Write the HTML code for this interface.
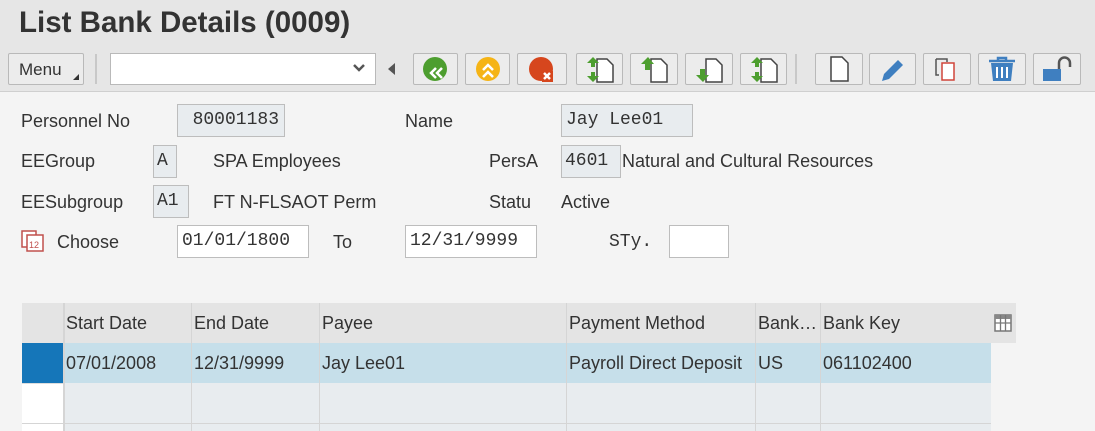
<!DOCTYPE html>
<html><head><style>
*{box-sizing:border-box}
body{margin:0;width:1095px;height:431px;overflow:hidden;background:#f4f4f4;font-family:"Liberation Sans",sans-serif;color:#333;position:relative}
.a{position:absolute}
.top{left:0;top:0;width:1095px;height:92px;background:#e6e6e6;border-bottom:1px solid #cfcfcf}
.btn{position:absolute;top:53px;height:32px;background:#ececec;border:1px solid #b9b9b9;border-radius:2px}
.t{position:absolute;font-size:18px;color:#333}
.in{position:absolute;height:33px;border:1px solid #bdbdbd;font-family:"Liberation Mono",monospace;font-size:18px;padding:5px 4px}
.ro{background:#e8ecef}
.wh{background:#fff}
.c{position:absolute;font-size:18px;top:0;line-height:40px;padding-left:3px}
</style></head><body>
<div class="a top"></div>
<div class="t" style="left:19px;top:6px;font-size:29.5px;font-weight:bold;color:#333">List Bank Details (0009)</div>
<div class="btn" style="left:8px;width:76px;font-size:17px;padding:6px 0 0 10px">Menu<span class="a" style="right:4px;bottom:4px;width:0;height:0;border-left:6px solid transparent;border-bottom:6px solid #333"></span></div>
<div class="a" style="left:95px;top:54px;width:2px;height:30px;background:#c8c8c8"></div>
<div class="a wh" style="left:110px;top:53px;width:266px;height:32px;border:1px solid #b9b9b9"></div>
<svg class="a" style="left:352px;top:62px" width="14" height="12"><path d="M2 3l5 5 5-5" stroke="#555" stroke-width="2.5" fill="none"/></svg>
<div class="a" style="left:388px;top:63px;width:0;height:0;border-top:6px solid transparent;border-bottom:6px solid transparent;border-right:7px solid #555"></div>
<div class="btn" style="left:413px;width:45px"><svg width="43" height="30"><circle cx="21" cy="15" r="12" fill="#4d9e2f"/><path d="M22 14l-5 5 5 5M28 14l-5 5 5 5" stroke="#fff" stroke-width="2.5" fill="none"/></svg></div>
<div class="btn" style="left:465px;width:45px"><svg width="43" height="30"><circle cx="22" cy="15" r="12" fill="#f5b416"/><path d="M17 16l5-5 5 5M17 23l5-5 5 5" stroke="#fff" stroke-width="2.5" fill="none"/></svg></div>
<div class="btn" style="left:517px;width:50px"><svg width="48" height="30"><circle cx="23" cy="15" r="12" fill="#d6461d"/><rect x="24" y="17" width="11" height="11" fill="#d6461d"/><path d="M26 19l6 6M32 19l-6 6" stroke="#fff" stroke-width="2.5"/></svg></div>
<svg width="0" height="0"><defs><g id="pg"><path d="M20 5h10l6 6v17H20z" fill="#fff" stroke="#444" stroke-width="1.5"/></g></defs></svg>
<div class="btn" style="left:576px;width:47px"><svg width="45" height="30"><use href="#pg"/><path d="M16 3l-6 6h4v4h4v-4h4z" fill="#4d9e2f"/><path d="M16 28l-6-6h4v-4h4v4h4z" fill="#4d9e2f"/></svg></div>
<div class="btn" style="left:630px;width:48px"><svg width="45" height="30"><use href="#pg"/><path d="M17 3l-7 7h4v6h5v-6h4z" fill="#4d9e2f"/></svg></div>
<div class="btn" style="left:685px;width:48px"><svg width="45" height="30"><use href="#pg"/><path d="M17 28l-7-7h4v-6h5v6h4z" fill="#4d9e2f"/></svg></div>
<div class="btn" style="left:740px;width:47px"><svg width="45" height="30"><use href="#pg"/><path d="M16 3l-6 6h4v4h4v-4h4z" fill="#4d9e2f"/><path d="M16 28l-6-6h4v-4h4v4h4z" fill="#4d9e2f"/></svg></div>
<div class="a" style="left:795px;top:54px;width:2px;height:30px;background:#c8c8c8"></div>
<div class="btn" style="left:815px;width:48px"><svg width="46" height="30"><path d="M15 3h11l6 6v18H15z" fill="#fff" stroke="#444" stroke-width="1.5"/></svg></div>
<div class="btn" style="left:869px;width:47px"><svg width="45" height="30"><path d="M12 27l2-7 14-14 5 5-14 14z" fill="#3f7fc0"/></svg></div>
<div class="btn" style="left:923px;width:48px"><svg width="46" height="30"><path d="M12 5h11v3M12 5v16h3" stroke="#555" stroke-width="1.5" fill="none"/><rect x="18" y="9" width="12" height="17" fill="#fff" stroke="#d0453a" stroke-width="1.5"/></svg></div>
<div class="btn" style="left:978px;width:48px"><svg width="46" height="30"><path d="M10 7h26M19 7V4h8v3" stroke="#3f7fc0" stroke-width="2.5" fill="none"/><path d="M12 9h22l-2 18H14z" fill="#3f7fc0"/><path d="M18 13v11M23 13v11M28 13v11" stroke="#fff" stroke-width="2"/></svg></div>
<div class="btn" style="left:1033px;width:48px"><svg width="46" height="30"><rect x="9" y="15" width="18" height="12" fill="#3f7fc0"/><path d="M25 15v-6a5.5 5.5 0 0 1 11 0v4" stroke="#555" stroke-width="2.5" fill="none"/></svg></div>

<div class="t" style="left:21px;top:111px">Personnel No</div>
<div class="in ro" style="left:177px;top:104px;width:108px;text-align:right;padding-right:5px">80001183</div>
<div class="t" style="left:405px;top:111px">Name</div>
<div class="in ro" style="left:561px;top:104px;width:132px">Jay Lee01</div>
<div class="t" style="left:21px;top:151px">EEGroup</div>
<div class="in ro" style="left:153px;top:145px;width:24px;padding:5px 3px">A</div>
<div class="t" style="left:213px;top:151px">SPA Employees</div>
<div class="t" style="left:489px;top:151px">PersA</div>
<div class="in ro" style="left:561px;top:145px;width:60px;padding:5px 3px">4601</div>
<div class="t" style="left:622px;top:151px">Natural and Cultural Resources</div>
<div class="t" style="left:21px;top:192px">EESubgroup</div>
<div class="in ro" style="left:153px;top:185px;width:36px;padding:5px 3px">A1</div>
<div class="t" style="left:213px;top:192px">FT N-FLSAOT Perm</div>
<div class="t" style="left:489px;top:192px">Statu</div>
<div class="t" style="left:561px;top:192px">Active</div>
<svg class="a" style="left:21px;top:230px" width="24" height="22"><rect x="1" y="1" width="14" height="16" fill="#fff" stroke="#c0504d" stroke-width="1.5"/><rect x="6" y="5" width="16" height="16" fill="#fff" stroke="#c0504d" stroke-width="1.5"/><text x="8" y="18" font-size="9" fill="#c0504d" font-family="Liberation Sans">12</text></svg>
<div class="t" style="left:57px;top:232px">Choose</div>
<div class="in wh" style="left:177px;top:225px;width:132px">01/01/1800</div>
<div class="t" style="left:333px;top:232px">To</div>
<div class="in wh" style="left:405px;top:225px;width:132px">12/31/9999</div>
<div class="t" style="left:609px;top:232px;font-family:'Liberation Mono',monospace">STy.</div>
<div class="in wh" style="left:669px;top:225px;width:60px"></div>

<div class="a" style="left:22px;top:303px;width:994px;height:128px;background:#f4f4f4">
 <div class="a" style="left:0;top:0;width:994px;height:40px;background:#e4e4e4"></div>
 <div class="a" style="left:0;top:40px;width:41px;height:40px;background:#1576b9"></div>
 <div class="a" style="left:41px;top:40px;width:928px;height:40px;background:#c6dfea"></div>
 <div class="a" style="left:0;top:80px;width:41px;height:48px;background:#fff;border-top:1px solid #ddd"></div>
 <div class="a" style="left:41px;top:80px;width:928px;height:48px;background:#e8ecef"></div>
 <div class="a" style="left:0;top:120px;width:969px;height:1px;background:#d5d5d5"></div>
 <div class="a" style="left:41px;top:0;width:2px;height:128px;background:#d5d5d5"></div>
 <div class="a" style="left:169px;top:0;width:1px;height:128px;background:#d5d5d5"></div>
 <div class="a" style="left:297px;top:0;width:1px;height:128px;background:#d5d5d5"></div>
 <div class="a" style="left:544px;top:0;width:1px;height:128px;background:#d5d5d5"></div>
 <div class="a" style="left:733px;top:0;width:1px;height:128px;background:#d5d5d5"></div>
 <div class="a" style="left:798px;top:0;width:1px;height:128px;background:#d5d5d5"></div>
 <div class="c" style="left:41px">Start Date</div><div class="c" style="left:169px">End Date</div><div class="c" style="left:297px">Payee</div><div class="c" style="left:544px">Payment Method</div><div class="c" style="left:733px">Bank…</div><div class="c" style="left:798px">Bank Key</div>
 <div class="c" style="left:41px;top:40px">07/01/2008</div><div class="c" style="left:169px;top:40px">12/31/9999</div><div class="c" style="left:297px;top:40px">Jay Lee01</div><div class="c" style="left:544px;top:40px">Payroll Direct Deposit</div><div class="c" style="left:733px;top:40px">US</div><div class="c" style="left:798px;top:40px">061102400</div>
 <svg class="a" style="left:972px;top:11px" width="18" height="18"><rect x="1" y="1" width="16" height="16" fill="#fff" stroke="#777" stroke-width="1.5"/><rect x="1" y="1" width="16" height="4" fill="#888"/><path d="M6.5 1v16M11.5 1v16M1 9h16" stroke="#777" stroke-width="1.3"/></svg>
</div>
</body></html>
